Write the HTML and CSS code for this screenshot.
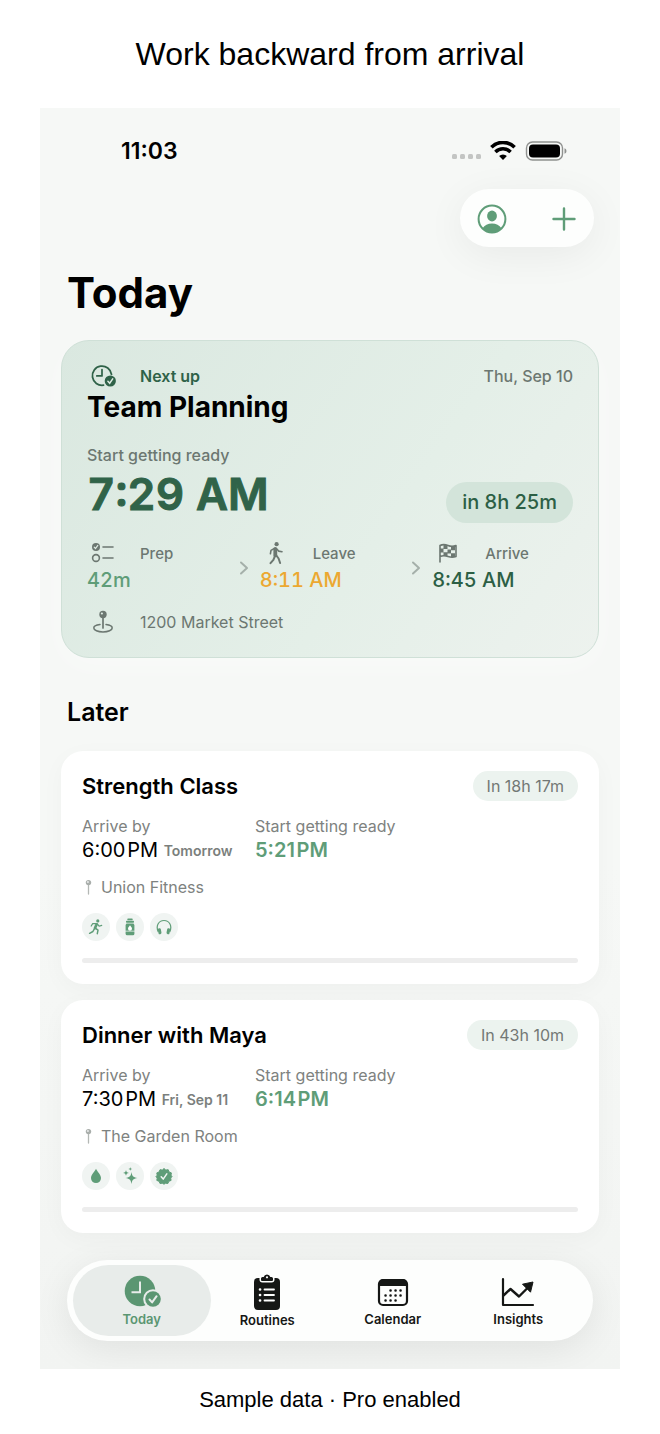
FILE: index.html
```
<!DOCTYPE html>
<html lang="en">
<head>
    <meta charset="UTF-8">
    <meta name="viewport" content="width=device-width, initial-scale=1.0">
    <title>Work backward from arrival</title>
    <link rel="stylesheet" href="styles.css">
</head>
<body>
    <h1 class="headline">Work backward from arrival</h1>

    <main class="screen">
        <div class="status-bar">
            <span class="clock">11:03</span>
            <div class="status-icons">
                <svg width="30" height="24" viewBox="0 0 30 24" fill="#c3c5c3">
                    <rect x="1" y="15" width="5" height="5" rx="1.5"/>
                    <rect x="9" y="15" width="5" height="5" rx="1.5"/>
                    <rect x="17" y="15" width="5" height="5" rx="1.5"/>
                    <rect x="25" y="15" width="5" height="5" rx="1.5"/>
                </svg>
                <svg width="26" height="20" viewBox="0 0 26 20">
                    <path d="M1.400 6.200a16.400 16.400 0 0 1 23.200 0" fill="none" stroke="#000" stroke-width="3.600"/>
                    <path d="M5.400 10.900a10.700 10.700 0 0 1 15.200 0" fill="none" stroke="#000" stroke-width="3.500"/>
                    <path d="M13 19l-3.900-3.900a5.600 5.600 0 0 1 7.800 0z"/>
                </svg>
                <svg width="42" height="20" viewBox="0 0 42 20">
                    <rect x="1.500" y="1" width="36" height="18" rx="6" fill="none" stroke="#8f918f" stroke-width="1.400"/>
                    <rect x="4" y="3.500" width="31" height="13" rx="4"/>
                    <path d="M39.500 7.200c2.600.8 2.600 4.800 0 5.600z" fill="#8f918f"/>
                </svg>
            </div>
        </div>

        <div class="toolbar">
            <button class="tool" aria-label="Profile">
                <svg width="30" height="30" viewBox="0 0 30 30">
                    <circle cx="15" cy="15" r="13.4" fill="none" stroke="currentColor" stroke-width="2"/>
                    <ellipse cx="15" cy="12" rx="4.9" ry="5.4" fill="currentColor"/>
                    <path d="M5.6 24.2C7.4 21 11 19.4 15 19.4s7.6 1.6 9.4 4.8A13.4 13.4 0 0 1 15 28.400a13.400 13.400 0 0 1-9.400-4.200z" fill="currentColor"/>
                </svg>
            </button>
            <button class="tool" aria-label="Add">
                <svg width="26" height="26" viewBox="0 0 26 26" fill="none" stroke="currentColor" stroke-width="2.400" stroke-linecap="round">
                    <path d="M13 2.500v21M2.500 13h21"/>
                </svg>
            </button>
        </div>

        <h2 class="page-title">Today</h2>

        <section class="hero">
            <div class="hero-top">
                <span class="icon-label next-up">
                    <svg class="icon" width="26" height="24" viewBox="0 0 26 24">
                        <path d="M13.500 21.200a9.600 9.600 0 1 1 8-10.800" fill="none" stroke="currentColor" stroke-width="1.800" stroke-linecap="round"/>
                        <path d="M12 5.500v6.400H6.800" fill="none" stroke="currentColor" stroke-width="1.700" stroke-linecap="round" stroke-linejoin="round"/>
                        <circle cx="20.300" cy="17" r="5.600" fill="currentColor"/>
                        <path d="M17.900 17.200l1.800 2 3-4.300" fill="none" stroke="#dfece4" stroke-width="1.500" stroke-linecap="round"/>
                    </svg>
                    Next up
                </span>
                <span class="date">Thu, Sep 10</span>
            </div>
            <h3 class="hero-title">Team Planning</h3>
            <p class="hero-caption">Start getting ready</p>
            <div class="hero-time-row">
                <span class="hero-time">7:29 AM</span>
                <span class="countdown">in 8h 25m</span>
            </div>

            <div class="steps">
                <div class="step">
                    <span class="icon-label">
                        <svg class="icon" width="24" height="22" viewBox="0 0 24 22" fill="none" stroke="currentColor" stroke-width="1.600" stroke-linecap="round">
                            <circle cx="5" cy="5" r="4" fill="currentColor" stroke="none"/>
                            <path d="M3.200 5.200l1.300 1.400 2.300-3.200" stroke="#dfece4" stroke-width="1.200"/>
                            <circle cx="5" cy="16" r="3.400"/>
                            <path d="M12 5h10M12 16h10"/>
                        </svg>
                        Prep
                    </span>
                    <span class="step-value prep">42m</span>
                </div>
                <svg class="chevron" width="12" height="16" viewBox="0 0 12 16"><path d="M3 2.500L9 8l-6 5.500"/></svg>
                <div class="step">
                    <span class="icon-label">
                        <svg class="icon" width="20" height="24" viewBox="0 0 20 24" fill="none" stroke="currentColor" stroke-linecap="round" stroke-linejoin="round">
                            <circle cx="10.600" cy="3.200" r="2.100" fill="currentColor" stroke="none"/>
                            <path d="M9.300 8v6.300" stroke-width="3.800"/>
                            <path d="M8 7.600l-3 1.800-.6 3.400M10.600 7.800l2 2.300 3.400.6" stroke-width="1.600"/>
                            <path d="M9 14.800l-1.600 4L4.500 22.200M10 14l2.600 3.500 1.500 4.500" stroke-width="2"/>
                        </svg>
                        Leave
                    </span>
                    <span class="step-value leave">8:11 AM</span>
                </div>
                <svg class="chevron" width="12" height="16" viewBox="0 0 12 16"><path d="M3 2.500L9 8l-6 5.500"/></svg>
                <div class="step">
                    <span class="icon-label">
                        <svg class="icon" width="20" height="20" viewBox="0 0 20 20">
                            <path d="M2 19V2.500c3-1.500 5-1.200 8 0s5 1.200 8 0v11c-3 1.200-5 1-8 0s-5-1.200-8 0" fill="none" stroke="currentColor" stroke-width="1.600" stroke-linecap="round" stroke-linejoin="round"/>
                            <path d="M5.500 2h4v4h-4zM13 3.500h4v3.700h-4zM2 5.600h3.500v4H2zM9.500 6.400H13v4H9.500zM5.500 9.200h4v3.800h-4zM13 10.200h4V14h-4z" fill="currentColor"/>
                        </svg>
                        Arrive
                    </span>
                    <span class="step-value arrive">8:45 AM</span>
                </div>
            </div>

            <p class="icon-label address">
                <svg class="icon" width="22" height="24" viewBox="0 0 22 24">
                    <circle cx="11" cy="4.500" r="3.700" fill="currentColor"/>
                    <circle cx="9.900" cy="3.500" r="1.100" fill="#dfece4"/>
                    <path d="M11 8v10" stroke="currentColor" stroke-width="1.700" stroke-linecap="round"/>
                    <path d="M8 14.600c-3.800.4-6.200 1.600-6.200 3.400 0 2.200 4 3.900 9.200 3.900s9.200-1.700 9.200-3.900c0-1.800-2.400-3-6.200-3.400" fill="none" stroke="currentColor" stroke-width="1.500" stroke-linecap="round"/>
                </svg>
                1200 Market Street
            </p>
        </section>

        <h2 class="section-title">Later</h2>

        <section class="event">
            <div class="event-top">
                <h3>Strength Class</h3>
                <span class="badge">In 18h 17m</span>
            </div>
            <div class="event-times">
                <div>
                    <p class="caption">Arrive by</p>
                    <p class="time">6:00&#8202;PM <span class="day">Tomorrow</span></p>
                </div>
                <div>
                    <p class="caption">Start getting ready</p>
                    <p class="time start">5:21&#8202;PM</p>
                </div>
            </div>
            <p class="place">
                <svg width="13" height="16" viewBox="0 0 13 16"><path d="M6.500 5v10" stroke="#b4b8b5" stroke-width="1.300" stroke-linecap="round"/><circle cx="6.500" cy="3.600" r="2.700" fill="#a9aeab"/><circle cx="5.900" cy="3" r="1.100" fill="#e4e6e5"/></svg>
                Union Fitness
            </p>
            <div class="chips">
                <span class="chip">
                    <svg width="16" height="16" viewBox="0 0 16 16" fill="none" stroke="currentColor" stroke-linecap="round" stroke-linejoin="round">
                        <circle cx="9.800" cy="1.900" r="1.600" fill="currentColor" stroke="none"/>
                        <path d="M8.700 5.300L7 9" stroke-width="2.700"/>
                        <path d="M8 4.600H4.700L3.200 7M9.500 5.200l1.600 2 2.600-.8" stroke-width="1.200"/>
                        <path d="M7.300 9.200l2.700 2-.7 3.500M6.500 9.600l-1.600 2.900-3.300 1.800" stroke-width="1.500"/>
                    </svg>
                </span>
                <span class="chip">
                    <svg width="12" height="18" viewBox="0 0 12 18" fill="currentColor">
                        <rect x="3.300" y="0.500" width="5.400" height="1.800" rx=".7"/>
                        <rect x="2" y="2.800" width="8" height="2" rx=".7"/>
                        <path d="M2.500 5.500h7l.9 1.500v5.800H1.600V7z"/>
                        <path d="M1.600 13.600h8.800v2.200a1.500 1.500 0 0 1-1.500 1.500H3.100a1.500 1.500 0 0 1-1.500-1.500z"/>
                        <path d="M6 7.300c.9 1.300 2 2.300 2 3.400a2 2 0 0 1-4 0c0-1.100 1.100-2.100 2-3.400z" fill="#fff"/>
                    </svg>
                </span>
                <span class="chip">
                    <svg width="16" height="16" viewBox="0 0 16 16">
                        <path d="M2.300 13C-.5 7 2.500 1.500 8 1.500S16.500 7 13.700 13" fill="none" stroke="currentColor" stroke-width="1.200"/>
                        <rect x="2.200" y="9.300" width="3" height="6" rx="1.400" fill="currentColor" transform="rotate(-10 3.700 12.300)"/>
                        <rect x="10.800" y="9.300" width="3" height="6" rx="1.400" fill="currentColor" transform="rotate(10 12.300 12.300)"/>
                    </svg>
                </span>
            </div>
            <progress class="bar" value="0" max="100" aria-label="Strength Class progress"></progress>
        </section>

        <section class="event">
            <div class="event-top">
                <h3>Dinner with Maya</h3>
                <span class="badge">In 43h 10m</span>
            </div>
            <div class="event-times">
                <div>
                    <p class="caption">Arrive by</p>
                    <p class="time">7:30&#8202;PM <span class="day">Fri, Sep 11</span></p>
                </div>
                <div>
                    <p class="caption">Start getting ready</p>
                    <p class="time start">6:14&#8202;PM</p>
                </div>
            </div>
            <p class="place">
                <svg width="13" height="16" viewBox="0 0 13 16"><path d="M6.500 5v10" stroke="#b4b8b5" stroke-width="1.300" stroke-linecap="round"/><circle cx="6.500" cy="3.600" r="2.700" fill="#a9aeab"/><circle cx="5.900" cy="3" r="1.100" fill="#e4e6e5"/></svg>
                The Garden Room
            </p>
            <div class="chips">
                <span class="chip">
                    <svg width="12" height="16" viewBox="0 0 12 16" fill="currentColor"><path d="M6 .8c1 2.700 5 5.700 5 9.300a5 5 0 0 1-10 0C1 6.500 5 3.500 6 .8z"/></svg>
                </span>
                <span class="chip">
                    <svg width="16" height="18" viewBox="0 0 16 18" fill="currentColor">
                        <path d="M9.500 5c.6 4 1.500 5.200 6 6-4.500.8-5.400 2-6 6-.6-4-1.500-5.200-6-6 4.500-.8 5.400-2 6-6z"/>
                        <path d="M4 3c.4 2 .9 2.500 3 2.900C4.900 6.300 4.400 6.800 4 8.800c-.4-2-.9-2.500-3-2.900C3.100 5.500 3.600 5 4 3z"/>
                        <path d="M8.300 0c.3 1.500.6 1.700 2 2-1.400.3-1.700.5-2 2-.3-1.500-.6-1.700-2-2 1.400-.3 1.700-.5 2-2z"/>
                    </svg>
                </span>
                <span class="chip">
                    <svg width="18" height="18" viewBox="0 0 18 18">
                        <path d="M9 1.500l1.800 1.600 2.400-.4.900 2.300 2.300.9-.4 2.300L17 9.500l-1.300 1.600.4 2.300-2.300.9-.9 2.200-2.300-.3L9 17.200l-1.700-1-2.300.3-.9-2.200-2.300-.9.400-2.300L1 9.500l1.200-1.300-.4-2.300 2.300-.9.900-2.300 2.300.4z" fill="currentColor" stroke="currentColor" stroke-width="1" stroke-linejoin="round"/>
                        <path d="M6.200 9.800l2 2.300 3.600-5.200" fill="none" stroke="#f0f5f2" stroke-width="1.500" stroke-linecap="round" stroke-linejoin="round"/>
                    </svg>
                </span>
            </div>
            <progress class="bar" value="0" max="100" aria-label="Dinner with Maya progress"></progress>
        </section>

        <nav class="tabs">
            <a class="tab active" href="#today">
                <svg width="38" height="36" viewBox="0 0 38 36">
                    <circle cx="17" cy="17" r="15.300" fill="currentColor"/>
                    <path d="M17 7.500v10.700H8.500" fill="none" stroke="#e8ecea" stroke-width="2"/>
                    <circle cx="30" cy="25" r="9.800" fill="#e8ecea"/>
                    <circle cx="30" cy="25" r="7.800" fill="currentColor"/>
                    <path d="M26.500 25.500l2.600 2.900 4.500-6.200" fill="none" stroke="#e8ecea" stroke-width="2" stroke-linecap="round" stroke-linejoin="round"/>
                </svg>
                Today
            </a>
            <a class="tab" href="#routines">
                <svg width="28" height="38" viewBox="0 0 28 38">
                    <rect x="1" y="5" width="26" height="32" rx="4" fill="currentColor"/>
                    <path d="M6.500 4v2.500a3 3 0 0 0 3 3h9a3 3 0 0 0 3-3V4z" fill="#fdfefd"/>
                    <path d="M8 7V5.500A1.500 1.500 0 0 1 9.500 4h1.200a3.400 3.400 0 0 1 6.600 0h1.200A1.500 1.500 0 0 1 20 5.500V7a1 1 0 0 1-1 1H9a1 1 0 0 1-1-1z" fill="currentColor"/>
                    <circle cx="14" cy="4.300" r="1.100" fill="#fdfefd"/>
                    <path d="M11.500 16.500h9.500M11.500 22h9.500M11.500 27.500h9.500" stroke="#fdfefd" stroke-width="1.800" stroke-linecap="round"/>
                    <path d="M7 16.500h.1M7 22h.1M7 27.500h.1" stroke="#fdfefd" stroke-width="2.600" stroke-linecap="round"/>
                </svg>
                Routines
            </a>
            <a class="tab" href="#calendar">
                <svg width="32" height="36" viewBox="0 0 32 36">
                    <rect x="2" y="6" width="28" height="25" rx="4" fill="none" stroke="currentColor" stroke-width="2.200"/>
                    <path d="M2 12V10a5 5 0 0 1 5-5h18a5 5 0 0 1 5 5v2z" fill="currentColor"/>
                    <path d="M13.500 16.500h.1M18.500 16.500h.1M23.500 16.500h.1M8.500 21.500h.1M13.500 21.500h.1M18.500 21.500h.1M23.500 21.500h.1M8.500 26.500h.1M13.500 26.500h.1M18.500 26.500h.1" stroke="currentColor" stroke-width="2.500" stroke-linecap="round"/>
                </svg>
                Calendar
            </a>
            <a class="tab" href="#insights">
                <svg width="36" height="36" viewBox="0 0 36 36">
                    <path d="M3 5v26h30" fill="none" stroke="currentColor" stroke-width="2.200" stroke-linecap="round" stroke-linejoin="round"/>
                    <path d="M3.500 21.500l7-6.500 8.500 7.500 9-9" fill="none" stroke="currentColor" stroke-width="2.400" stroke-linejoin="round"/>
                    <path d="M33 8l-10.500 2.200 8 8z" fill="currentColor" stroke="currentColor" stroke-linejoin="round"/>
                </svg>
                Insights
            </a>
        </nav>
    </main>

    <footer class="note">Sample data · Pro enabled</footer>
</body>
</html>
```
FILE: styles.css
```
* {
    box-sizing: border-box;
}
body {
    margin: 0;
    background: #fff;
    color: #000;
    font-family: Inter, "Liberation Sans", sans-serif;
}
h1, h2, h3, p {
    margin: 0;
}
svg {
    display: block;
    flex: none;
}
.headline {
    padding: 36px 20px;
    text-align: center;
    font: 400 32px/36px "Liberation Sans", Arial, sans-serif;
}
.screen {
    margin: 0 40px;
    padding: 28px 21px;
    overflow: hidden;
    background: linear-gradient(#f6f8f6, #f6f8f6 60%, #f2f4f2);
}

/* status bar and toolbar */
.status-bar {
    display: flex;
    justify-content: space-between;
    align-items: center;
    height: 30px;
    padding: 0 32px 0 60px;
}
.clock {
    font-size: 23px;
    font-weight: 600;
}
.status-icons {
    display: flex;
    align-items: center;
    gap: 9px;
}
.toolbar {
    display: flex;
    justify-content: space-between;
    width: 134px;
    height: 58px;
    margin: 23px 5px 0 auto;
    padding: 1px 8px 0 10px;
    border-radius: 29px;
    background: #fdfefd;
    box-shadow: 0 8px 40px rgba(0, 0, 0, 0.06);
}
.tool {
    display: flex;
    justify-content: center;
    align-items: center;
    width: 44px;
    padding: 0;
    border: 0;
    background: none;
    color: #5f9d78;
    cursor: pointer;
}
.page-title {
    margin: 18px 6px 0;
    font-size: 42px;
    font-weight: 700;
    line-height: 56px;
}

/* next event */
.hero {
    margin-top: 19px;
    padding: 23px 25px 21px;
    border: 1px solid #cfe0d7;
    border-radius: 28px;
    background: linear-gradient(125deg, #dae8e0, #e4efe8 60%, #edf2ee);
    box-shadow: 0 8px 30px rgba(255, 255, 255, 0.4);
}
.hero-top {
    display: flex;
    justify-content: space-between;
    align-items: center;
    height: 24px;
}
.icon-label {
    display: flex;
    align-items: center;
    gap: 21px;
    height: 24px;
    color: #6c7771;
    font-size: 15px;
    font-weight: 500;
}
.icon {
    width: 32px;
}
.next-up {
    color: #2f6248;
    font-size: 16px;
    font-weight: 600;
}
.date {
    color: #6c7771;
    font-size: 16px;
    font-weight: 500;
}
.hero-title {
    font-size: 28px;
    font-weight: 700;
    line-height: 38px;
}
.hero-caption {
    margin-top: 18px;
    color: #6c7771;
    font-size: 16px;
    font-weight: 500;
    line-height: 22px;
}
.hero-time-row {
    display: flex;
    justify-content: space-between;
    align-items: flex-end;
    height: 57px;
}
.hero-time {
    align-self: flex-start;
    color: #306349;
    font-size: 44px;
    font-weight: 600;
    font-variant-numeric: tabular-nums;
    line-height: 56px;
    -webkit-text-stroke: 1px #306349;
}
.countdown {
    padding: 0 16px;
    border-radius: 21px;
    background: #d3e4da;
    color: #2c5f45;
    font-size: 20px;
    font-weight: 500;
    line-height: 41px;
}
.steps {
    display: flex;
    align-items: center;
    gap: 10px;
    margin-top: 18px;
}
.step {
    flex: 1;
}
.step-value {
    display: block;
    font-size: 20px;
    font-weight: 500;
    font-variant-numeric: tabular-nums;
    line-height: 30px;
}
.prep {
    color: #5f9d78;
}
.leave {
    color: #eca831;
}
.arrive {
    color: #2c5f45;
}
.chevron {
    fill: none;
    stroke: #a5b0aa;
    stroke-width: 2;
    stroke-linecap: round;
    stroke-linejoin: round;
}
.address {
    height: 28px;
    margin-top: 13px;
    font-size: 16px;
    font-weight: 400;
}

/* later events */
.section-title {
    margin: 38px 6px 22px;
    font-size: 25px;
    font-weight: 600;
    line-height: 33px;
}
.event {
    margin-bottom: 16px;
    padding: 20px 21px 21px;
    border-radius: 22px;
    background: #fff;
    box-shadow: 0 6px 24px rgba(0, 0, 0, 0.03);
}
.event-top {
    display: flex;
    justify-content: space-between;
    align-items: center;
}
.event-top h3 {
    font-size: 22px;
    font-weight: 600;
}
.badge {
    padding: 0 14px;
    border-radius: 15px;
    background: #ecf3ef;
    color: #737875;
    font-size: 16px;
    line-height: 30px;
}
.event-times {
    display: grid;
    grid-template-columns: 151px 1fr;
    gap: 22px;
    margin-top: 14px;
}
.caption {
    color: #7e8280;
    font-size: 16px;
    line-height: 22px;
}
.time {
    font-size: 20px;
    line-height: 26px;
    white-space: nowrap;
}
.day {
    color: #7b7f7d;
    font-size: 14px;
    font-weight: 600;
    vertical-align: 1px;
}
.start {
    color: #5f9d78;
    font-weight: 600;
}
.place {
    display: flex;
    align-items: center;
    gap: 6px;
    margin-top: 12px;
    color: #7e8280;
    font-size: 16px;
    line-height: 22px;
}
.chips {
    display: flex;
    gap: 6px;
    margin-top: 15px;
}
.chip {
    display: flex;
    justify-content: center;
    align-items: center;
    width: 28px;
    height: 28px;
    border-radius: 50%;
    background: #f0f4f2;
    color: #5f9d78;
}
.bar {
    display: block;
    width: 100%;
    height: 5px;
    margin-top: 17px;
    border: 0;
    appearance: none;
}
.bar::-webkit-progress-bar {
    border-radius: 3px;
    background: #ededed;
}
.bar::-webkit-progress-value {
    border-radius: 3px;
    background: #5f9d78;
}

/* tab bar */
.tabs {
    display: grid;
    grid-template-columns: repeat(4, 1fr);
    margin: 27px 6px 0;
    padding: 5px 12px;
    border-radius: 41px;
    background: #fdfefd;
    box-shadow: 0 8px 36px rgba(0, 0, 0, 0.08);
}
.tab {
    display: flex;
    flex-direction: column;
    align-items: center;
    justify-content: center;
    height: 71px;
    border-radius: 36px;
    color: #151715;
    font-size: 13px;
    font-weight: 600;
    line-height: 18px;
    text-decoration: none;
}
.active {
    margin: 0 -6px;
    background: #e8ecea;
    color: #5b9672;
}
.note {
    padding: 18px 20px 22px;
    text-align: center;
    font: 400 22px/26px "Liberation Sans", Arial, sans-serif;
}
```
